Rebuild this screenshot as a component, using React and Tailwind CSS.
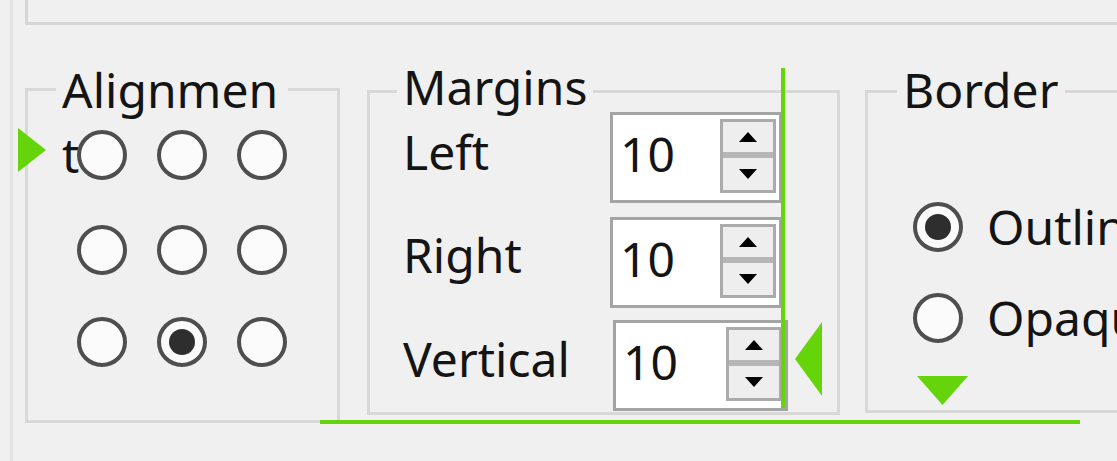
import React from "react";

function Radio({ checked }) {
  return (
    <div className="w-[50px] h-[50px] rounded-full border-[4px] border-[#4e4e4e] bg-[#fbfbfb] flex items-center justify-center shrink-0">
      {checked && <div className="w-[26px] h-[26px] rounded-full bg-[#2e2e2e]" />}
    </div>
  );
}

function Spin({ extra = "" }) {
  return (
    <div className={`h-[91px] border-[3px] border-[#a4a4a4] bg-white flex items-start shrink-0 ${extra}`}>
      <div className="flex-1 pl-[7px] leading-[65px] mt-[6px]">10</div>
      <div className="mt-[4px] mr-[3px] w-[56px] h-[74px] border-[3px] border-[#ababab] bg-[#eeeeee] flex flex-col">
        <div className="h-[30px] flex items-center justify-center">
          <svg width="18" height="10" viewBox="0 0 18 10"><polygon points="9,0 18,10 0,10" fill="#000" /></svg>
        </div>
        <div className="h-[6px] bg-[#b6b6b6]" />
        <div className="h-[32px] flex items-center justify-center">
          <svg width="18" height="10" viewBox="0 0 18 10"><polygon points="0,0 18,0 9,10" fill="#000" /></svg>
        </div>
      </div>
    </div>
  );
}

export default function App() {
  return (
    <div className="relative w-[1117px] h-[461px] overflow-hidden bg-[#f0f0f0] pl-[10px] font-['Noto_Sans',sans-serif] text-[48px] text-[#141414]">
      <div className="h-full border-l-[3px] border-[#e3e3e3] pl-[12px] flex flex-col">
        <div className="h-[25px] shrink-0 border-l-[3px] border-b-[3px] border-[#d6d6d6]" />
        <div className="flex items-start mt-[63px]">
          {/* Alignment */}
          <div className="w-[315px] h-[335px] shrink-0 border-[3px] border-[#d8d8d8]">
            <div className="ml-[28px] -mt-[34px] w-[232px] h-[65px] px-[6px] leading-[65px] bg-[#f0f0f0] break-all">
              Alignment
            </div>
            <div className="ml-[49px] mt-[8px] flex flex-col">
              <div className="flex gap-[30px]">
                <Radio /><Radio /><Radio />
              </div>
              <div className="flex gap-[30px] mt-[45px]">
                <Radio /><Radio /><Radio />
              </div>
              <div className="flex gap-[30px] mt-[42px]">
                <Radio /><Radio checked /><Radio />
              </div>
            </div>
          </div>

          {/* Margins */}
          <div className="ml-[27px] mt-[2px] w-[473px] h-[325px] shrink-0 border-[3px] border-[#d8d8d8]">
            <div className="ml-[27px] -mt-[39px] w-fit h-[56px] px-[6px] leading-[65px] bg-[#f0f0f0]">
              Margins
            </div>
            <div className="pl-[33px] flex flex-col">
              <div className="flex items-start">
                <div className="w-[207px] mt-[9px] leading-[65px]">Left</div>
                <Spin extra="mt-[2px] w-[172px]" />
              </div>
              <div className="flex items-start">
                <div className="w-[207px] mt-[19px] leading-[65px]">Right</div>
                <Spin extra="mt-[14px] w-[172px]" />
              </div>
              <div className="flex items-start">
                <div className="w-[207px] mt-[18px] leading-[65px] whitespace-nowrap">Vertical</div>
                <Spin extra="mt-[12px] ml-[3px] w-[175px]" />
              </div>
            </div>
          </div>

          {/* Border */}
          <div className="ml-[25px] mt-[2px] w-[300px] h-[323px] shrink-0 border-[3px] border-[#d8d8d8]">
            <div className="ml-[29px] -mt-[36px] w-fit h-[53px] px-[6px] leading-[65px] bg-[#f0f0f0]">
              Border
            </div>
            <div className="pl-[45px] flex flex-col">
              <div className="flex items-center gap-[24px] mt-[92px] whitespace-nowrap">
                <Radio checked />
                <span className="leading-[50px]">Outline</span>
              </div>
              <div className="flex items-center gap-[24px] mt-[41px] whitespace-nowrap">
                <Radio />
                <span className="leading-[50px]">Opaque</span>
              </div>
            </div>
          </div>
        </div>
      </div>

      {/* green annotation overlays */}
      <div className="absolute left-[781px] top-[68px] w-[4px] h-[340px] bg-[#66d40a]" />
      <div className="absolute left-[320px] top-[420px] w-[760px] h-[4px] bg-[#66d40a]" />
      <svg className="absolute left-[18px] top-[128px]" width="28" height="44" viewBox="0 0 28 44">
        <polygon points="0,0 28,22 0,44" fill="#66d40a" />
      </svg>
      <svg className="absolute left-[795px] top-[322px]" width="27" height="74" viewBox="0 0 27 74">
        <polygon points="27,0 27,74 0,37" fill="#66d40a" />
      </svg>
      <svg className="absolute left-[917px] top-[376px]" width="51" height="29" viewBox="0 0 51 29">
        <polygon points="0,0 51,0 25.5,29" fill="#66d40a" />
      </svg>
    </div>
  );
}
